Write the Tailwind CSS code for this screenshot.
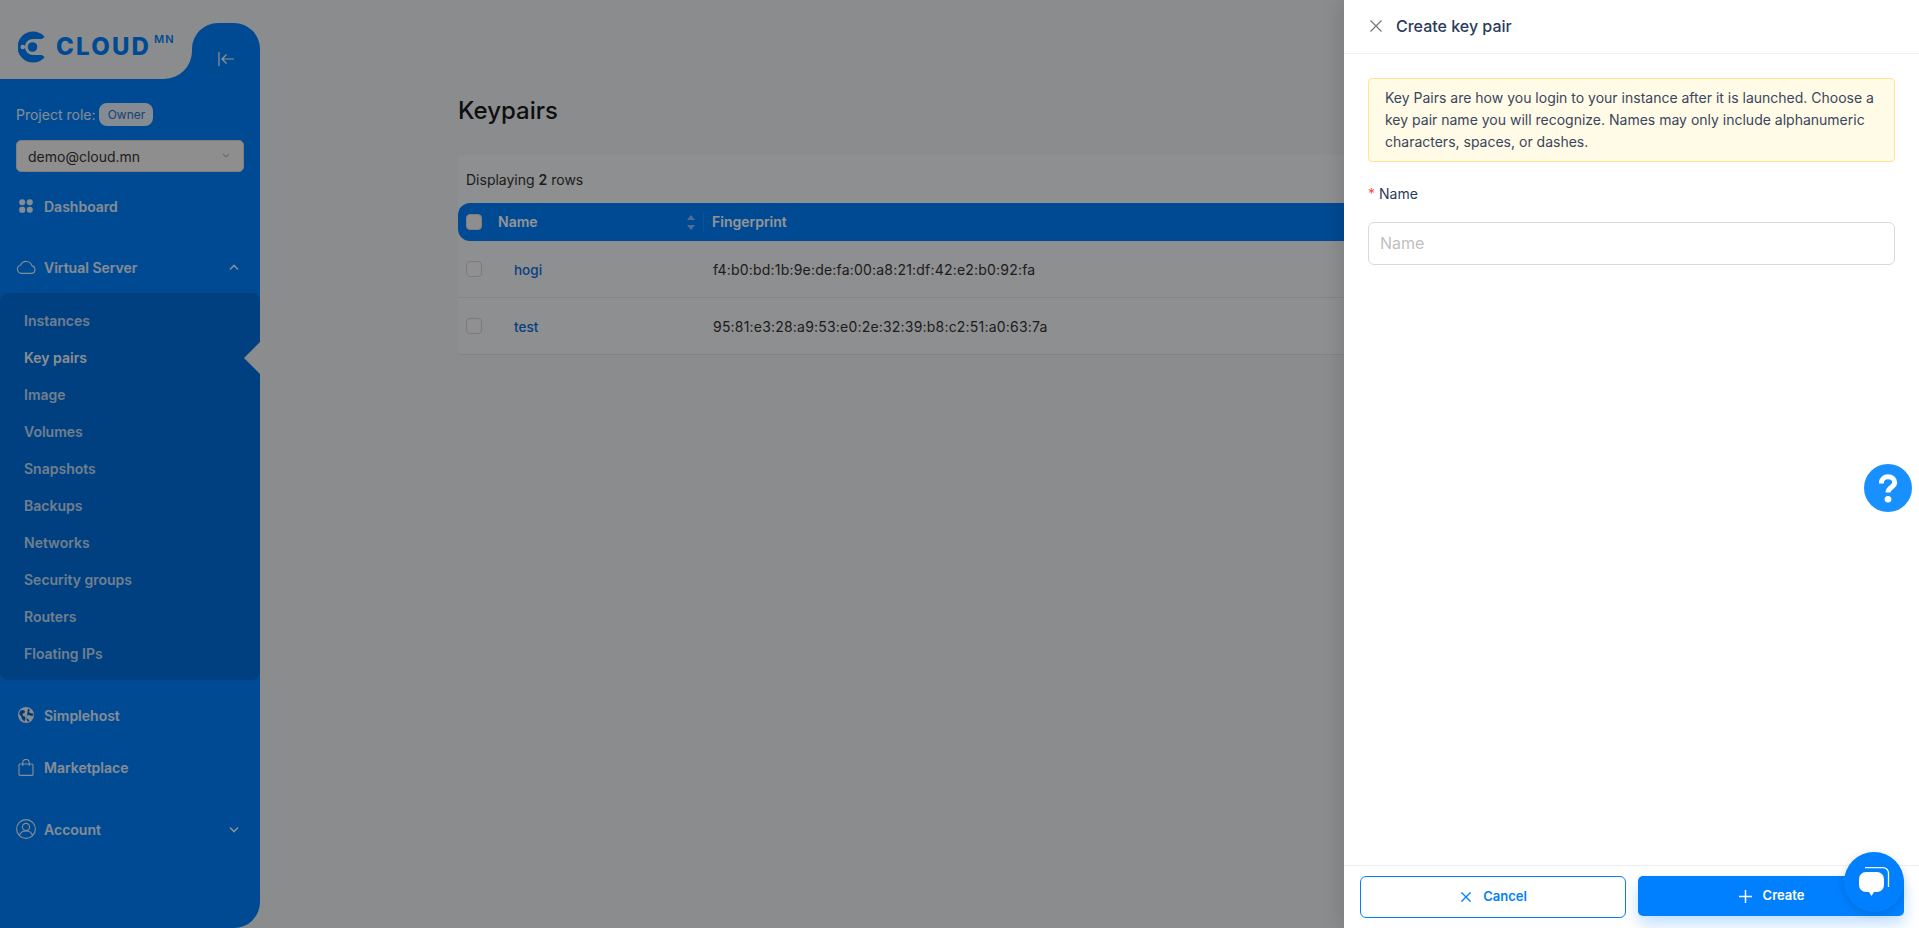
<!DOCTYPE html>
<html lang="en">
<head>
  <meta charset="UTF-8" />
  <title>Keypairs</title>
  <script src="https://cdn.jsdelivr.net/npm/@tailwindcss/browser@4"></script>
</head>
<body class="font-['Inter',sans-serif] bg-[#f0f2f5] text-[#1f2937] overflow-hidden">
<div class="relative flex w-[1919px] h-[928px] overflow-hidden">

  <!-- sidebar -->
  <aside class="w-[260px] h-full shrink-0 flex flex-col">
    <div class="h-[79px] flex shrink-0 bg-[linear-gradient(to_bottom,transparent_50px,#0080ff_50px)]">
      <div class="w-[192px] bg-[#f0f2f5] rounded-br-[28px] flex items-start pt-[31px] pl-[18px]">
        <svg width="30" height="32" viewBox="0 0 30 32">
          <circle cx="15" cy="16" r="15.500" fill="#0080ff"/>
          <circle cx="33" cy="16" r="12" fill="#f0f2f5"/>
          <circle cx="15" cy="16" r="8" fill="#f0f2f5"/>
          <path d="M16 8h10v16H16z" fill="#f0f2f5"/>
          <circle cx="14.500" cy="16" r="4.800" fill="#0080ff"/>
          <circle cx="4.800" cy="16" r="2.300" fill="#f0f2f5"/>
        </svg>
        <span class="ml-[8px] text-[24px] leading-[32px] font-extrabold tracking-[2.2px] text-[#0080ff]">CLOUD</span>
        <span class="ml-[3px] text-[11px] leading-[14px] font-semibold tracking-[1px] text-[#0080ff] mt-[1px]">MN</span>
      </div>
      <div class="flex-1 mt-[23px] bg-[#0080ff] rounded-t-[26px] flex justify-center pt-[28px]">
        <svg width="17" height="16" viewBox="0 0 17 16" fill="none" stroke="#fff" stroke-width="1.2"><path d="M1 1v14M16 8H4M8.500 3.500 4 8l4.500 4.500"/></svg>
      </div>
    </div>

    <div class="flex-1 bg-[#0080ff] rounded-br-[26px] flex flex-col text-white">
      <div class="flex items-center pl-[16px] mt-[24px] h-[23px]">
        <span class="text-[14px] text-white/90">Project role:</span>
        <span class="ml-[4px] h-[23px] w-[54px] rounded-[8px] bg-[#e6f0fb] text-[#2f6fc4] text-[12px] flex items-center justify-center">Owner</span>
      </div>
      <div class="mx-[16px] mt-[14px] h-[32px] rounded-[5px] bg-[#f5f5f5] border border-[#d9d9d9] flex items-center justify-between pl-[11px] pr-[13px] text-[14px] text-[#333]">
        <span>demo@cloud.mn</span>
        <svg width="8" height="6" viewBox="0 0 8 6" fill="none" stroke="#bbb" stroke-width="1.2"><path d="M1 1l3 3 3-3"/></svg>
      </div>

      <a class="mt-[14px] h-[40px] flex items-center pl-[19px] text-[14px] font-semibold text-white/90">
        <svg width="14" height="14" viewBox="0 0 14 14" fill="#fff" fill-opacity=".9"><circle cx="3.200" cy="3.200" r="3"/><circle cx="10.800" cy="3.200" r="3"/><rect x=".2" y="7.800" width="6" height="6" rx="2.600"/><circle cx="10.800" cy="10.800" r="3"/></svg>
        <span class="ml-[11px]">Dashboard</span>
      </a>

      <a class="mt-[21px] h-[40px] flex items-center pl-[16px] pr-[21px] text-[14px] font-semibold text-white/90">
        <svg width="20" height="14" viewBox="0 0 20 14" fill="none" stroke="#fff" stroke-opacity=".9" stroke-width="1.100"><path d="M5 13.400h10.400a3.800 3.800 0 0 0 .6-7.500A6 6 0 0 0 4.700 5 4.300 4.300 0 0 0 5 13.400z"/></svg>
        <span class="ml-[8px] flex-1">Virtual Server</span>
        <svg width="10" height="7" viewBox="0 0 10 7" fill="none" stroke="#fff" stroke-opacity=".9" stroke-width="1.600"><path d="M1 5.500l4-4 4 4"/></svg>
      </a>

      <div class="relative mt-[6px] h-[387px] bg-black/13 rounded-[8px] pt-[9px] flex flex-col text-[14px] font-semibold text-white/75">
        <a class="h-[37px] flex items-center pl-[24px]">Instances</a>
        <a class="h-[37px] flex items-center pl-[24px] text-white/95">Key pairs</a>
        <a class="h-[37px] flex items-center pl-[24px]">Image</a>
        <a class="h-[37px] flex items-center pl-[24px]">Volumes</a>
        <a class="h-[37px] flex items-center pl-[24px]">Snapshots</a>
        <a class="h-[37px] flex items-center pl-[24px]">Backups</a>
        <a class="h-[37px] flex items-center pl-[24px]">Networks</a>
        <a class="h-[37px] flex items-center pl-[24px]">Security groups</a>
        <a class="h-[37px] flex items-center pl-[24px]">Routers</a>
        <a class="h-[37px] flex items-center pl-[24px]">Floating IPs</a>
        <svg class="absolute right-0 top-[49px]" width="16" height="32" viewBox="0 0 16 32"><path d="M16 0 0 16l16 16z" fill="#f0f2f5"/></svg>
      </div>

      <a class="mt-[15px] h-[40px] flex items-center pl-[18px] text-[14px] font-semibold text-white/90">
        <svg width="16" height="16" viewBox="0 0 16 16"><circle cx="8" cy="8" r="8" fill="#fff" fill-opacity=".9"/><path d="M2.500 3.500 5 3l2 1-.5 2-2 .5L5 9l2 .5.5 2-1 3L4 12 3 9 1 7zM10 1.500 12 3l-1 1.500 1 1.500 3 .5.5 2-2 .5-2.500-1-2 .5-.5 2.500 2 1.500 1 1.500-1.500.8-1.500-2.300" fill="#0065c8"/></svg>
        <span class="ml-[10px]">Simplehost</span>
      </a>
      <a class="mt-[12px] h-[40px] flex items-center pl-[18px] text-[14px] font-semibold text-white/90">
        <svg width="16" height="17" viewBox="0 0 16 17" fill="none" stroke="#fff" stroke-opacity=".9" stroke-width="1.100"><rect x="1" y="5" width="14" height="11.400" rx="1"/><path d="M4.800 7V3.600a3.200 3.200 0 0 1 6.400 0V7"/></svg>
        <span class="ml-[10px]">Marketplace</span>
      </a>
      <a class="mt-[22px] h-[40px] flex items-center pl-[16px] pr-[21px] text-[14px] font-semibold text-white/90">
        <svg width="20" height="20" viewBox="0 0 20 20" fill="none" stroke="#fff" stroke-opacity=".9" stroke-width="1.100"><circle cx="10" cy="10" r="9.400"/><circle cx="10" cy="8" r="3.600"/><path d="M3.600 16.600c.6-3 3-4.600 6.400-4.600s5.800 1.600 6.400 4.600"/></svg>
        <span class="ml-[8px] flex-1">Account</span>
        <svg width="10" height="7" viewBox="0 0 10 7" fill="none" stroke="#fff" stroke-opacity=".9" stroke-width="1.600"><path d="M1 1.500l4 4 4-4"/></svg>
      </a>
    </div>
  </aside>

  <!-- main content -->
  <main class="flex-1 pl-[198px] pr-[100px] pt-[95px]">
    <div class="flex items-center justify-between h-[40px]">
      <h1 class="text-[24px] font-medium text-[#1a1a1a] pb-[9px]">Keypairs</h1>
      <button class="w-[158px] h-[40px] rounded-[5px] bg-[#0080ff] text-white flex items-center pl-[18px] shadow-[0_8px_16px_rgba(0,128,255,.25)]">
        <svg width="11" height="11" viewBox="0 0 11 11" stroke="#fff" stroke-width="1.200"><path d="M5.500 0v11M0 5.500h11"/></svg>
      </button>
    </div>
    <div class="mt-[20px] h-[200px] bg-[#f5f6f8] rounded-[4px] text-[14px]">
      <div class="h-[48px] flex items-center pl-[8px] text-[#333]">
        <span>Displaying <b class="font-semibold">2</b> rows</span>
      </div>
      <div class="h-[38px] bg-[#0080ff] rounded-l-[12px] flex items-center text-white font-semibold">
        <span class="w-[16px] h-[16px] ml-[8px] rounded-[4px] bg-[#f4f4f4] border border-[#ddd]"></span>
        <span class="ml-[16px] w-[189px] pb-[1px]">Name</span>
        <svg width="8" height="15" viewBox="0 0 8 15" fill="#fff" fill-opacity=".5"><path d="M4 0l4 5H0zM4 15 0 10h8z"/></svg>
        <span class="ml-[8px] w-px h-[20px] bg-white/10"></span>
        <span class="ml-[8px] pb-[1px]">Fingerprint</span>
      </div>
      <div class="h-[57px] flex items-center border-b border-[#e4e4e4]">
        <span class="w-[16px] h-[16px] ml-[8px] rounded-[4px] bg-white/40 border border-[#d4d4d4]"></span>
        <a class="ml-[32px] w-[199px] text-[#0a6fdc] font-medium text-[13.5px] pt-[2px]">hogi</a>
        <span class="tracking-[.2px] text-[#333]">f4:b0:bd:1b:9e:de:fa:00:a8:21:df:42:e2:b0:92:fa</span>
      </div>
      <div class="h-[57px] flex items-center border-b border-[#e4e4e4]">
        <span class="w-[16px] h-[16px] ml-[8px] rounded-[4px] bg-white/40 border border-[#d4d4d4]"></span>
        <a class="ml-[32px] w-[199px] text-[#0a6fdc] font-medium text-[13.5px] pt-[2px]">test</a>
        <span class="tracking-[.2px] text-[#333]">95:81:e3:28:a9:53:e0:2e:32:39:b8:c2:51:a0:63:7a</span>
      </div>
    </div>
  </main>

  <!-- mask -->
  <div class="absolute inset-0 bg-black/42"></div>

  <!-- drawer -->
  <div class="absolute right-0 top-0 bottom-0 w-[575px] bg-white flex flex-col shadow-[-6px_0_16px_rgba(0,0,0,.1)]">
    <div class="h-[54px] shrink-0 border-b border-[#f0f0f0] flex items-center pl-[26px] pb-[2px]">
      <svg width="12" height="12" viewBox="0 0 12 12" stroke="#777" stroke-width="1.200"><path d="M.5.5l11 11M11.500.5l-11 11"/></svg>
      <span class="ml-[14px] text-[16px] font-medium text-[#2b3a5a]">Create key pair</span>
    </div>
    <div class="flex-1 px-[24px] pt-[24px]">
      <div class="h-[84px] bg-[#fffbe6] border border-[#ffe58f] rounded-[4px] pl-[16px] pr-[10px] pt-[8px] text-[14px] leading-[22px] text-[#3a4560]">
        Key Pairs are how you login to your instance after it is launched. Choose a key pair name you will recognize. Names may only include alphanumeric characters, spaces, or dashes.
      </div>
      <div class="mt-[20px] h-[22px] flex items-center text-[14px] text-[#2b3a5a]">
        <span class="text-[#ff4d4f] mr-[4px] text-[14px]">*</span>Name
      </div>
      <div class="mt-[18px] h-[43px] border border-[#d9d9d9] rounded-[6px] flex items-center pl-[11px] pb-[2px] text-[16px] text-[#bfbfbf]">Name</div>
    </div>
    <div class="h-[63px] shrink-0 border-t border-[#eeeeee] flex pt-[10px] pl-[16px] pr-[15px] gap-[12px]">
      <button class="w-[266px] h-[42px] rounded-[6px] border border-[#0080ff] text-[#0080ff] text-[13px] font-semibold flex items-center justify-center pl-[2px]">
        <svg width="10" height="10" viewBox="0 0 12 12" stroke="#0080ff" stroke-width="1.600"><path d="M.5.5l11 11M11.500.5l-11 11"/></svg>
        <span class="ml-[12px]">Cancel</span>
      </button>
      <button class="w-[266px] h-[40px] rounded-[5px] bg-[#0080ff] text-white text-[13px] font-semibold flex items-center justify-center pl-[1px] shadow-[0_8px_16px_rgba(0,128,255,.25)]">
        <svg width="13" height="13" viewBox="0 0 13 13" stroke="#fff" stroke-width="1.500"><path d="M6.500 0v13M0 6.500h13"/></svg>
        <span class="ml-[11px]">Create</span>
      </button>
    </div>
  </div>

  <!-- help -->
  <div class="absolute left-[1864px] top-[464px] w-[48px] h-[48px] rounded-full bg-[#1890ff] flex items-center justify-center">
    <svg width="20" height="30" viewBox="0 0 24 36" fill="none"><path d="M4 12.500C4 7.500 7.500 4.500 12 4.500s8 3 8 7c0 5.500-8 6-8 12" stroke="#fff" stroke-width="6"/><circle cx="12" cy="31.500" r="4" fill="#fff"/></svg>
  </div>

  <!-- chat -->
  <div class="absolute left-[1844px] top-[852px] w-[60px] h-[60px] rounded-full bg-[#0080ff] shadow-[0_2px_10px_rgba(0,0,0,.15)] flex items-center justify-center">
    <svg width="32" height="32" viewBox="0 0 32 32"><path d="M8 6h11a7 7 0 0 1 7 7v6a7 7 0 0 1-7 7h-3l-2.500 4-2.500-4H8a7 7 0 0 1-7-7v-6a7 7 0 0 1 7-7z" fill="#fff"/><path d="M7 1.600h18a5.500 5.500 0 0 1 5.500 5.500V21" fill="none" stroke="#fff" stroke-width="1.300"/></svg>
  </div>
</div>
</body>
</html>
